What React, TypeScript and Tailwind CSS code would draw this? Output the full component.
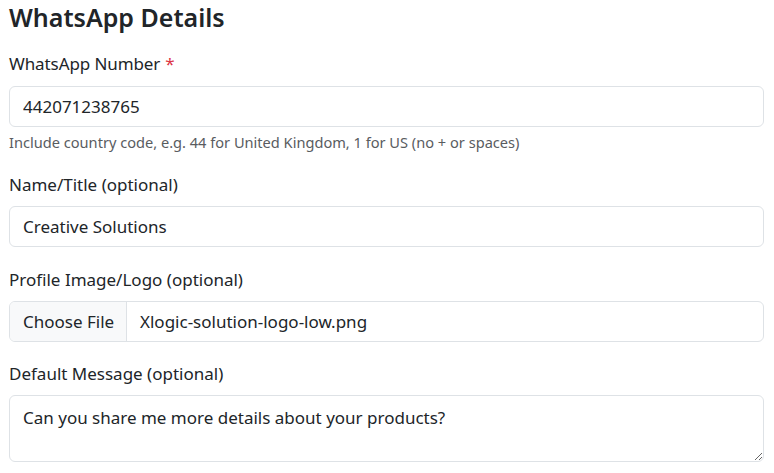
import React from "react";

const font = { fontFamily: '"Noto Sans", "Open Sans", sans-serif' };

export default function App() {
  return (
    <div className="w-[774px] h-[473px] overflow-hidden bg-white text-[#212529] pl-[9px] pr-[10px]" style={font}>
      <h4 className="text-[25px] leading-[31px] font-semibold pt-[2px] mb-[18px]">WhatsApp Details</h4>

      <div className="h-[26px] flex items-center text-[17px] tracking-[-0.1px]">
        WhatsApp Number<span className="text-[#dc3545] ml-[5px]">*</span>
      </div>
      <input
        readOnly
        value="442071238765"
        className="mt-[9px] block w-full h-[41px] border border-[#dee2e6] rounded-[6px] px-[13px] text-[17px] text-[#212529] outline-none"
        style={font}
      />
      <div className="mt-[4px] h-[23px] flex items-center text-[14.6px] text-[#595c5f]">
        Include country code, e.g. 44 for United Kingdom, 1 for US (no + or spaces)
      </div>

      <div className="mt-[18px] h-[26px] flex items-center text-[17px]">Name/Title (optional)</div>
      <input
        readOnly
        value="Creative Solutions"
        className="mt-[8px] block w-full h-[41px] border border-[#dee2e6] rounded-[6px] px-[13px] text-[17px] text-[#212529] outline-none"
        style={font}
      />

      <div className="mt-[20px] h-[26px] flex items-center text-[17px]">Profile Image/Logo (optional)</div>
      <div className="mt-[8px] flex w-full h-[41px] border border-[#dee2e6] rounded-[6px] overflow-hidden text-[17px]">
        <div className="w-[117px] bg-[#f8f9fa] border-r border-[#dee2e6] flex items-center pl-[13px]">Choose File</div>
        <div className="flex items-center pl-[13px]">Xlogic-solution-logo-low.png</div>
      </div>

      <div className="mt-[19px] h-[26px] flex items-center text-[17px]">Default Message (optional)</div>
      <textarea
        readOnly
        value="Can you share me more details about your products?"
        className="mt-[8px] block w-full h-[67px] border border-[#dee2e6] rounded-[6px] px-[13px] pt-[9px] pb-[5px] text-[17px] leading-[26px] text-[#212529] outline-none resize-y"
        style={font}
      />
    </div>
  );
}
